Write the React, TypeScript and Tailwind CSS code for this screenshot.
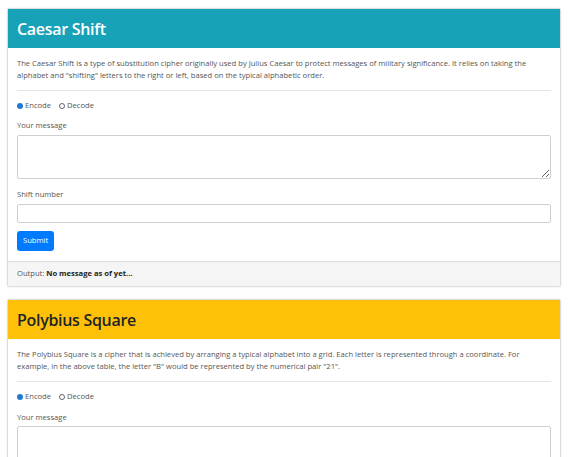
import { useState } from 'react'

const ciphers = [
  {
    title: 'Caesar Shift',
    header: 'bg-[#17a2b8] text-white',
    description:
      'The Caesar Shift is a type of substitution cipher originally used by Julius Caesar to protect messages of military significance. It relies on taking the alphabet and "shifting" letters to the right or left, based on the typical alphabetic order.',
    extra: 'Shift number',
  },
  {
    title: 'Polybius Square',
    header: 'bg-[#ffc107] text-[#212529]',
    description:
      'The Polybius Square is a cipher that is achieved by arranging a typical alphabet into a grid. Each letter is represented through a coordinate. For example, in the above table, the letter "B" would be represented by the numerical pair "21".',
    extra: null,
  },
]

export default function App() {
  return (
    <div className="min-h-[457px] bg-white px-[7px] pt-[8px] font-['Open_Sans','Noto_Sans',sans-serif] text-[#333]">
      <div className="w-[554px] flex flex-col gap-[12px]">
        {ciphers.map((c) => (
          <CipherCard key={c.title} cipher={c} />
        ))}
      </div>
    </div>
  )
}

function CipherCard({ cipher }: { cipher: (typeof ciphers)[number] }) {
  const [mode, setMode] = useState('encode')

  return (
    <section className="border border-[#dcdcdc] rounded-[2px] bg-white shadow-[0_0_3px_rgba(0,0,0,0.08)]">
      <div className={`${cipher.header} h-[39px] flex items-center px-[9px]`}>
        <h2 className="text-[16px] font-semibold tracking-[-0.3px]">{cipher.title}</h2>
      </div>

      <div className="px-[9px] pt-[9px] pb-[10px]">
        <p className="text-[7.6px] leading-[12px] text-[#555] pr-[10px]">{cipher.description}</p>
        <div className="h-px bg-[#e3e3e3] mt-[9px] mb-[9px]" />

        {/* Encode / Decode */}
        <div className="flex items-center gap-[8px] text-[7.6px] text-[#555]">
          {['encode', 'decode'].map((m) => (
            <button key={m} onClick={() => setMode(m)} className="flex items-center gap-[2px]">
              <span
                className={`w-[6px] h-[6px] rounded-full ${
                  mode === m ? 'bg-[#1f7ad6]' : 'border border-[#666]'
                }`}
              />
              <span className="capitalize">{m}</span>
            </button>
          ))}
        </div>

        <label className="block text-[7.6px] text-[#555] mt-[9px] mb-[3px]">Your message</label>
        <textarea className="block w-full h-[44px] border border-[#cfcfcf] rounded-[2px] resize-y" />

        {cipher.extra && (
          <>
            <label className="block text-[7.6px] text-[#555] mt-[10px] mb-[4px]">{cipher.extra}</label>
            <input className="block w-full h-[19px] border border-[#cfcfcf] rounded-[2px]" />
            <button className="mt-[8px] h-[20px] px-[6px] rounded-[3px] bg-[#007bff] text-white text-[7.6px]">
              Submit
            </button>
          </>
        )}
      </div>

      {cipher.extra && (
        <div className="h-[25px] flex items-center px-[9px] bg-[#f5f5f5] border-t border-[#dcdcdc] text-[7.6px] text-[#555]">
          Output:&nbsp;<span className="font-bold text-[#222]">No message as of yet...</span>
        </div>
      )}
    </section>
  )
}
